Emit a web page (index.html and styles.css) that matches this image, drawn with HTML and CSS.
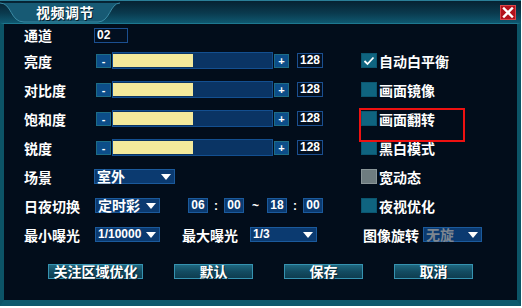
FILE: index.html
```html
<!DOCTYPE html>
<html lang="zh">
<head>
<meta charset="utf-8">
<title>视频调节</title>
<link rel="stylesheet" href="styles.css">
</head>
<body>
<div class="frame">
  <div class="titlebar">
    <svg class="tab" width="130" height="23" viewBox="0 0 130 23">
      <path d="M0,2 C12,2 10,21 24,21 L98,21 C110,21 110,2 120,2 Z" fill="#175a74"/>
      <path d="M0,2 C12,2 10,21 24,21 L98,21 C110,21 110,2 120,2" fill="none" stroke="#3a8aa4" stroke-width="1"/>
    </svg>
    <span class="title">视频调节</span>
    <div class="close">
      <svg width="16" height="15" viewBox="0 0 16 15"><path d="M4,3.5 L12,11.5 M12,3.5 L4,11.5" stroke="#fff" stroke-width="2.4" stroke-linecap="square"/></svg>
    </div>
  </div>
  <div class="body">
    <div class="row first">
      <span class="label">通道</span>
      <div class="ctrl"><span class="ibox chan">02</span></div>
    </div>
    <div class="row">
      <span class="label">亮度</span>
      <div class="ctrl"><span class="pm">-</span><div class="track"><div class="fill" style="width:80px"></div></div><span class="pm plus">+</span><span class="ibox val">128</span></div>
      <div class="chk"><span class="box on"><svg width="12" height="10" viewBox="0 0 12 10"><path d="M1.5,5 L4.5,8 L10.5,1.5" fill="none" stroke="#fff" stroke-width="1.8"/></svg></span>自动白平衡</div>
    </div>
    <div class="row">
      <span class="label">对比度</span>
      <div class="ctrl"><span class="pm">-</span><div class="track"><div class="fill" style="width:80px"></div></div><span class="pm plus">+</span><span class="ibox val">128</span></div>
      <div class="chk"><span class="box"></span>画面镜像</div>
    </div>
    <div class="row">
      <span class="label">饱和度</span>
      <div class="ctrl"><span class="pm">-</span><div class="track"><div class="fill" style="width:80px"></div></div><span class="pm plus">+</span><span class="ibox val">128</span></div>
      <div class="chk"><span class="box"></span>画面翻转</div>
    </div>
    <div class="row">
      <span class="label">锐度</span>
      <div class="ctrl"><span class="pm">-</span><div class="track"><div class="fill" style="width:80px"></div></div><span class="pm plus">+</span><span class="ibox val">128</span></div>
      <div class="chk"><span class="box"></span>黑白模式</div>
    </div>
    <div class="row">
      <span class="label">场景</span>
      <div class="ctrl"><span class="sel scene">室外<i class="arrow"></i></span></div>
      <div class="chk"><span class="box gray"></span>宽动态</div>
    </div>
    <div class="row">
      <span class="label">日夜切换</span>
      <div class="ctrl">
        <span class="sel daynight">定时彩<i class="arrow"></i></span>
        <span class="tbox t1">06</span><span class="sep">:</span><span class="tbox">00</span><span class="sep tilde">~</span><span class="tbox">18</span><span class="sep">:</span><span class="tbox">00</span>
      </div>
      <div class="chk"><span class="box"></span>夜视优化</div>
    </div>
    <div class="row last">
      <span class="label minlbl">最小曝光</span>
      <span class="sel minexp num">1/10000<i class="arrow"></i></span>
      <span class="label2 maxlbl">最大曝光</span>
      <span class="sel maxexp num">1/3<i class="arrow"></i></span>
      <span class="label2 rotlbl">图像旋转</span>
      <span class="sel rot"><span class="dim">无旋</span><i class="arrow"></i></span>
    </div>
    <div class="buttons">
      <span class="btn wide">关注区域优化</span>
      <span class="btn">默认</span>
      <span class="btn">保存</span>
      <span class="btn">取消</span>
    </div>
  </div>
  <div class="mark"></div>
</div>
</body>
</html>
```
FILE: styles.css
```css
html, body {
  margin: 0;
  padding: 0;
  background: #ffffff;
}
.frame {
  position: relative;
  width: 521px;
  height: 306px;
  display: flex;
  flex-direction: column;
  font-family: "Noto Sans CJK SC", "Noto Sans", sans-serif;
  color: #ffffff;
}
.titlebar {
  position: relative;
  height: 23px;
  flex: none;
  display: flex;
  align-items: center;
  padding-left: 36px;
  background: linear-gradient(#062232 0%, #0a3a4e 55%, #0f5870 100%);
  border-top: 1px solid #2a7f98;
  box-sizing: border-box;
}
.tab {
  position: absolute;
  left: 0;
  top: 0;
}
.title {
  position: relative;
  font-size: 14px;
  font-weight: 700;
  line-height: 16px;
  letter-spacing: 0.5px;
  text-shadow: 1px 1px 0 #04202c;
}
.close {
  margin-left: auto;
  margin-right: 5px;
  width: 16px;
  height: 15px;
  background: #b3121c;
  border: 1px solid #d9454a;
  box-sizing: border-box;
  display: flex;
  align-items: center;
  justify-content: center;
}
.close svg { display: block; margin: -1px; }
.body {
  flex: 1;
  background: #020d1b;
  border-top: 1px solid #1d7890;
  border-left: 4px solid #0c5467;
  border-right: 4px solid #0c5467;
  border-bottom: 6px solid #0e5a6e;
  padding-left: 20px;
  display: flex;
  flex-direction: column;
}
.row {
  height: 29px;
  display: grid;
  grid-template-columns: 71px 266px auto;
  align-items: center;
}
.row.first { height: 22px; }
.label, .label2 {
  font-size: 14px;
  font-weight: 700;
  line-height: 16px;
  white-space: nowrap;
}
.ctrl {
  display: flex;
  align-items: center;
}
.ibox {
  box-sizing: border-box;
  height: 15px;
  border: 1px solid #1b4f90;
  background: #020f20;
  font-family: "Liberation Sans", Arial, sans-serif;
  font-weight: 700;
  font-size: 12px;
  line-height: 13px;
  padding-left: 2px;
}
.chan { width: 34px; margin-left: -1px; margin-top: 1px; }
.val { width: 26px; margin-left: 8px; }
.pm {
  box-sizing: border-box;
  width: 15px;
  height: 14px;
  margin-left: 1px;
  background: #0c4d88;
  border: 1px solid #1d6c86;
  font-family: "Liberation Sans", Arial, sans-serif;
  font-weight: 700;
  font-size: 11px;
  line-height: 12px;
  text-align: center;
}
.track {
  box-sizing: border-box;
  width: 161px;
  height: 17px;
  margin-left: 1px;
  background: #0a3464;
  border: 1px solid #134f90;
  padding: 1px 0 1px 0;
}
.fill {
  height: 100%;
  background: #f3e99b;
}
.chk {
  display: flex;
  align-items: center;
  font-size: 14px;
  font-weight: 700;
  line-height: 16px;
  white-space: nowrap;
}
.box {
  box-sizing: border-box;
  width: 16px;
  height: 15px;
  margin-right: 2px;
  background: #0f6480;
  border: 1px solid #0b5670;
  display: flex;
  align-items: center;
  justify-content: center;
}
.box.gray {
  background: #6e7c80;
  border-color: #8a9699;
}
.sel {
  position: relative;
  box-sizing: border-box;
  height: 15px;
  background: #0b3a70;
  border: 1px solid #1b5a9c;
  font-size: 14px;
  font-weight: 700;
  line-height: 13px;
  padding-left: 2px;
  white-space: nowrap;
  display: flex;
  align-items: center;
}
.sel.num {
  font-family: "Liberation Sans", Arial, sans-serif;
  font-size: 12px;
  font-weight: 700;
}
.arrow {
  position: absolute;
  right: 3px;
  top: 4px;
  width: 0;
  height: 0;
  border-left: 5px solid transparent;
  border-right: 5px solid transparent;
  border-top: 6px solid #ffffff;
}
.scene { width: 81px; margin-left: -1px; }
.daynight { width: 65px; }
.tbox {
  box-sizing: border-box;
  width: 20px;
  height: 15px;
  background: #0b3a70;
  border: 1px solid #1b5a9c;
  font-family: "Liberation Sans", Arial, sans-serif;
  font-size: 12px;
  font-weight: 700;
  line-height: 13px;
  text-align: center;
}
.t1 { margin-left: 28px; }
.sep {
  width: 16px;
  text-align: center;
  font-family: "Liberation Sans", Arial, sans-serif;
  font-size: 12px;
  font-weight: 700;
}
.sep.tilde { width: 23px; }
.row.last {
  display: flex;
  align-items: center;
}
.minlbl { width: 71px; flex: none; }
.minexp { width: 65px; }
.maxlbl { margin-left: 22px; }
.maxexp { width: 67px; margin-left: 12px; }
.rotlbl { margin-left: 46px; }
.rot { width: 59px; margin-left: 4px; }
.dim { color: #7d8690; }
.buttons {
  display: flex;
  gap: 31px;
  margin-top: 15px;
  padding-left: 24px;
}
.btn {
  box-sizing: border-box;
  width: 79px;
  height: 15px;
  background: linear-gradient(#1f6880 0%, #134c62 50%, #0e3d50 100%);
  border: 1px solid #3592b0;
  font-size: 14px;
  font-weight: 700;
  line-height: 13px;
  text-align: center;
  text-shadow: 1px 1px 0 #052633;
  white-space: nowrap;
}
.btn.wide { width: 95px; }
.mark {
  position: absolute;
  left: 359px;
  top: 108px;
  width: 106px;
  height: 34px;
  box-sizing: border-box;
  border: 2px solid #ee1111;
}
```
